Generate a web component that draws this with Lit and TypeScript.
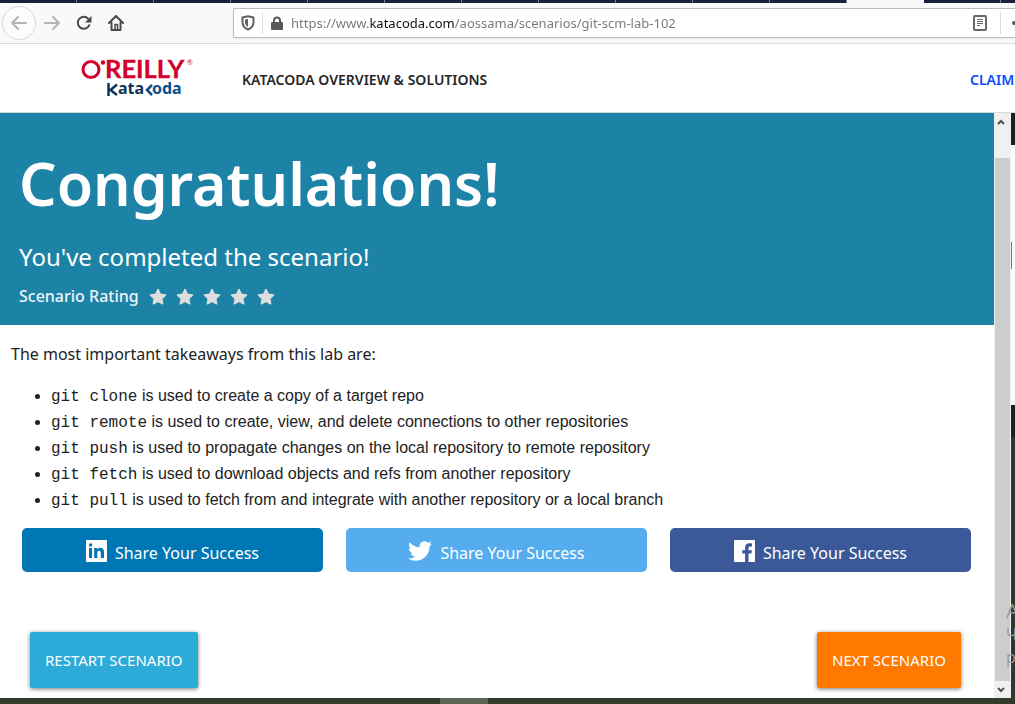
import { LitElement, html, svg, css } from "lit";
import { customElement } from "lit/decorators.js";

const commands = [
  ["git clone", "is used to create a copy of a target repo"],
  ["git remote", "is used to create, view, and delete connections to other repositories"],
  ["git push", "is used to propagate changes on the local repository to remote repository"],
  ["git fetch", "is used to download objects and refs from another repository"],
  ["git pull", "is used to fetch from and integrate with another repository or a local branch"],
];

const linkedin = svg`<path fill-rule="evenodd" d="M1 0h19a1 1 0 0 1 1 1v20a1 1 0 0 1-1 1H1a1 1 0 0 1-1-1V1a1 1 0 0 1 1-1zM3 8v10h3V8zM4.600 3.200a1.800 1.800 0 1 0 0 3.600 1.800 1.800 0 0 0 0-3.600zM8.200 8v10h3.100v-5.100c0-3 3.500-3 3.500 0V18H18v-6c0-5-5.200-5.200-6.700-2.600V8z"/>`;
const facebook = svg`<path d="M1 0h19a1 1 0 0 1 1 1v20a1 1 0 0 1-1 1h-5.500v-8.500h2.900l.5-3.300h-3.400V8c0-1 .3-1.600 1.700-1.600H18v-3a22 22 0 0 0-2.600-.1c-2.600 0-4.300 1.500-4.300 4.400v2.500H8.200v3.300h2.900V22H1a1 1 0 0 1-1-1V1a1 1 0 0 1 1-1z"/>`;
const twitter = svg`<path d="M23.950 4.570a10 10 0 0 1-2.820.77 4.960 4.960 0 0 0 2.160-2.720c-.95.55-2 .95-3.130 1.180a4.920 4.920 0 0 0-8.380 4.480C7.690 8.090 4.070 6.130 1.640 3.160a4.820 4.820 0 0 0-.67 2.480c0 1.710.87 3.210 2.190 4.100a4.900 4.900 0 0 1-2.230-.62v.06a4.920 4.920 0 0 0 3.950 4.830 5 5 0 0 1-2.210.08 4.940 4.940 0 0 0 4.600 3.420A9.870 9.870 0 0 1 0 19.540a14 14 0 0 0 7.550 2.210c9.050 0 14-7.500 14-13.980 0-.21 0-.42-.02-.63a9.940 9.940 0 0 0 2.420-2.570z"/>`;

const shares = [
  { name: "linkedin", box: "0 0 21 22", width: 21, icon: linkedin },
  { name: "twitter", box: "0 1 24 22", width: 24, icon: twitter },
  { name: "facebook", box: "0 0 21 22", width: 21, icon: facebook },
];

@customElement("browser-bar")
class BrowserBar extends LitElement {
  static styles = css`
    :host { display: block; font-family: "Noto Sans", sans-serif; }
    .tabs { display: flex; height: 3px; overflow: hidden; background: #1b1e3c; }
    .tab { flex: none; width: 76px; border-right: 1px solid #777a90; }
    .tab.active { background: #f9f9fa; border-color: #f9f9fa; }
    .toolbar { display: flex; align-items: center; height: 40px; background: #f9f9fa; border-bottom: 1px solid #dcdcdc; overflow: hidden; }
    button { display: grid; place-items: center; flex: none; padding: 0; border: 0; background: none; color: #4a4a4f; }
    .nav { width: 32px; height: 34px; }
    .back { width: 34px; margin-left: 2px; border: 1px solid #d8d8d8; border-radius: 50%; background: #fcfcfc; box-sizing: border-box; }
    .dim { color: #b4b4b6; }
    .field { display: flex; align-items: center; flex: 1; min-width: 0; height: 28px; margin-left: 101px; border: 1px solid #bcbcbc; border-right: 0; border-radius: 2px 0 0 2px; background: #fff; box-shadow: 0 1px 3px #0001; }
    .tool { width: 28px; height: 28px; }
    .line { width: 1px; height: 22px; background: #dcdcdc; flex: none; }
    .url { flex: 1; min-width: 0; padding: 0; border: 0; outline: 0; font: 13px "Noto Sans", sans-serif; color: transparent;
      background: linear-gradient(90deg, #77777a 78px, #111 78px, #111 163px, #77777a 163px); -webkit-background-clip: text; background-clip: text; }
    .reader { width: 40px; height: 28px; }
    .more { width: 14px; justify-items: end; }
  `;
  render() {
    const tabs = Array.from({ length: 14 }, (_, i) => i);
    return html`
      <div class="tabs">${tabs.map((i) => html`<span class="tab ${i === 11 ? "active" : ""}"></span>`)}</div>
      <div class="toolbar">
        <button class="nav back dim" aria-label="Back"><svg width="18" height="16" fill="none" stroke="currentColor" stroke-width="2" stroke-linecap="round" stroke-linejoin="round"><path d="M16 8H2M8 2 2 8l6 6"/></svg></button>
        <button class="nav dim" aria-label="Forward"><svg width="18" height="16" fill="none" stroke="currentColor" stroke-width="2" stroke-linecap="round" stroke-linejoin="round"><path d="M2 8h14M10 2l6 6-6 6"/></svg></button>
        <button class="nav" aria-label="Reload"><svg width="16" height="16"><path d="M13.300 10.200A6 6 0 1 1 12.300 3.800" fill="none" stroke="currentColor" stroke-width="2" stroke-linecap="round"/><path d="M15.500 1v6.500H9z" fill="currentColor"/></svg></button>
        <button class="nav" aria-label="Home"><svg width="16" height="16" fill="none" stroke="currentColor" stroke-width="2" stroke-linejoin="round" stroke-linecap="round"><path d="M1 8l7-7 7 7M3.500 7.500V15h9V7.500"/><path d="M7 14V9.500h2.500V14" stroke-width="1.500"/></svg></button>
        <div class="field">
          <button class="tool" aria-label="Tracking protection"><svg width="14" height="16"><path d="M7 1.200 12.500 2.500v4.500c0 4-2.500 6.300-5.500 7.500C4 13.300 1.500 11 1.500 7V2.500z" fill="none" stroke="#606064" stroke-width="2" stroke-linejoin="round"/><path d="M7 4v8c-2-1.200-3-2.800-3-5V4.600z" fill="#606064"/></svg></button>
          <span class="line"></span>
          <button class="tool" aria-label="Site information"><svg width="12" height="14"><path d="M3 7V4.500a3 3 0 0 1 6 0V7" fill="none" stroke="#58585c" stroke-width="2"/><rect y="6" width="12" height="8" rx="1" fill="#58585c"/></svg></button>
          <input class="url" aria-label="Address" .value=${"https://www.katacoda.com/aossama/scenarios/git-scm-lab-102"} />
          <button class="reader" aria-label="Reader view"><svg width="14" height="16" fill="none" stroke="#68686c"><rect x="1" y="1" width="12" height="14" rx="1" stroke-width="2"/><path d="M4 4.500h6M4 6.500h6M4 8.500h6M4 10.500h3"/></svg></button>
          <span class="line"></span>
          <button class="more" aria-label="Page actions"><svg width="3" height="4"><circle cx="2" cy="2" r="2" fill="#58585c"/></svg></button>
        </div>
      </div>`;
  }
}

@customElement("site-header")
class SiteHeader extends LitElement {
  static styles = css`
    :host { display: block; border-bottom: 1px solid #d8dada; background: #fff; }
    .bar { display: flex; align-items: center; height: 68px; white-space: nowrap; overflow: hidden; }
    a { text-decoration: none; }
    .logo { flex: none; display: block; margin-left: 81px; width: 112px; height: 44px; }
    .logo svg { display: block; }
    .link { flex: none; margin-left: 49px; padding-top: 4px; font: 600 14px/20px "Noto Sans", sans-serif; color: #262626; }
    .claim { margin-left: auto; width: 45px; color: #0a4bff; }
  `;
  render() {
    return html`<header class="bar">
      <a class="logo" href="#" aria-label="O'Reilly Katacoda">
        <svg width="112" height="44" aria-hidden="true">
          <circle cx="10" cy="13.500" r="8" fill="none" stroke="#d3002d" stroke-width="3"/>
          <circle cx="22" cy="6.500" r="2.200" fill="#d3002d"/>
          <text x="24" y="22" font-family="Lato" font-weight="700" font-size="25.500" fill="#d3002d" stroke="#d3002d" stroke-width=".3">REILLY</text>
          <text x="106" y="9" font-family="Lato" font-size="7" fill="#d3002d">®</text>
          <path d="M27.500 27v13M36 28.500l-6.500 5.500 6.500 5" fill="none" stroke="#0b3558" stroke-width="2.500"/>
          <text x="37" y="38" font-family="Noto Sans" font-weight="700" font-size="16" fill="#0b3558">ata</text>
          <path d="M71 29l-5 5 5 5" fill="none" stroke="#0b4f8a" stroke-width="2.500"/>
          <text x="71" y="38" font-family="Noto Sans" font-weight="700" font-size="16" fill="#0b4f8a">oda</text>
        </svg>
      </a>
      <a class="link" href="#">KATACODA OVERVIEW &amp; SOLUTIONS</a>
      <a class="link claim" href="#">CLAIM</a>
    </header>`;
  }
}

@customElement("app-root")
class AppRoot extends LitElement {
  static styles = css`
    :host { display: flex; flex-direction: column; min-height: 100vh; position: relative; overflow: hidden; background: #fff; color: #222; font: 16px/26px "Noto Sans", sans-serif; }
    .body { display: flex; flex: 1; }
    main { flex: 1; min-width: 0; }
    .hero { padding: 34px 19px 16px; background: #1d83a6; color: #fff; }
    h1 { margin: 0; font: 600 59px/72px "Noto Sans", sans-serif; }
    h2 { margin: 24px 0 12px; font: 400 24px/28px "Noto Sans", sans-serif; }
    .rating { display: flex; align-items: center; gap: 10px; color: #eef4f7; font-weight: 500; }
    .stars { display: flex; gap: 9px; }
    .star { display: block; padding: 0; border: 0; width: 18px; height: 18px; background: none; }
    .star svg { display: block; }
    .lead { margin: 0; padding: 16px 11px; }
    ul { margin: 0; padding: 0 0 0 51px; font-family: "Liberation Sans", sans-serif; }
    code { font: 16px "Liberation Mono", monospace; }
    .shares { display: grid; grid-template-columns: repeat(3, 1fr); gap: 23px; padding: 15px 23px 0 22px; }
    .share { display: flex; align-items: center; justify-content: center; gap: 8px; height: 44px; padding: 0; border: 0; border-radius: 5px; color: #fff; font: 16px/24px "Noto Sans", sans-serif; }
    .share svg { margin-top: 2px; }
    .share span { padding-top: 6px; }
    .linkedin { background: #0077b5; }
    .twitter { background: #55acee; }
    .facebook { background: #3b5998; }
    .actions { display: flex; justify-content: space-between; padding: 60px 33px 10px 30px; }
    .action { height: 56px; padding: 0 15px; border: 0; border-radius: 2px; box-shadow: 0 1px 4px #0008; color: #fff; font: 15px/20px "Noto Sans", sans-serif; }
    .restart { background: #2caad8; }
    .next { background: #ff7800; }
    .scroll { display: flex; flex-direction: column; width: 16px; padding-left: 1px; background: #f0f0f0; box-sizing: content-box; }
    .arrow { display: grid; place-items: center; height: 17px; padding: 0 4px 0 0; border: 0; background: none; }
    .thumb { flex: 1; margin: 28px 1px 0 0; background: #cdcdcd; }
    .behind { display: flex; flex-direction: column; width: 4px; }
    .dark { height: 32px; background: #1e1e1e; }
    .pale { height: 131px; padding-top: 129px; background: #fafafa; }
    .pale { height: 163px; padding-top: 97px; }
    .grip { width: 1px; height: 27px; background: #777; }
    .wall { flex: 1; background: #35352b; }
    .taskbar { height: 6px; background: #323c28; }
    .task { width: 48px; height: 6px; margin-left: 440px; background: #5c6655; }
    .mark { position: absolute; right: 0; bottom: 35px; width: 9px; overflow: hidden; color: #99999a; font: 16px/23px "Open Sans", sans-serif; pointer-events: none; }
    .mark b { display: block; font-size: 20px; font-weight: 400; line-height: 25px; }
    .mark span { display: block; }
  `;
  render() {
    return html`
      <browser-bar></browser-bar>
      <site-header></site-header>
      <div class="body">
        <main>
          <section class="hero">
            <h1>Congratulations!</h1>
            <h2>You've completed the scenario!</h2>
            <div class="rating"><span>Scenario Rating</span>
              <div class="stars">${[1, 2, 3, 4, 5].map((n) => html`<button class="star" aria-label="Rate ${n}"><svg width="18" height="18"><path d="M9 2.500l2.300 4.800 5.200.7-3.800 3.600 1 5.200L9 14.300l-4.700 2.500 1-5.200L1.500 8l5.200-.7z" fill="#ddd" stroke="#ddd" stroke-width="1.500" stroke-linejoin="round"/></svg></button>`)}</div>
            </div>
          </section>
          <p class="lead">The most important takeaways from this lab are:</p>
          <ul>${commands.map(([c, t]) => html`<li><code>${c}</code> ${t}</li>`)}</ul>
          <div class="shares">${shares.map((s) => html`<button class="share ${s.name}"><svg width=${s.width} height="22" viewBox=${s.box} fill="#fff">${s.icon}</svg><span>Share Your Success</span></button>`)}</div>
          <div class="actions"><button class="action restart">RESTART SCENARIO</button><button class="action next">NEXT SCENARIO</button></div>
        </main>
        <div class="scroll">
          <button class="arrow" aria-label="Scroll up"><svg width="8" height="6"><path d="M1 5l3-3 3 3" fill="none" stroke="#505050" stroke-width="2"/></svg></button>
          <div class="thumb"></div>
          <button class="arrow" aria-label="Scroll down"><svg width="8" height="6"><path d="M1 1l3 3 3-3" fill="none" stroke="#505050" stroke-width="2"/></svg></button>
        </div>
        <div class="behind"><div class="dark"></div><div class="pale"><div class="grip"></div></div><div class="dark"></div><div class="wall"></div></div>
      </div>
      <div class="taskbar"><div class="task"></div></div>
      <div class="mark"><b>А</b><span>Ч</span><span>р</span></div>`;
  }
}
